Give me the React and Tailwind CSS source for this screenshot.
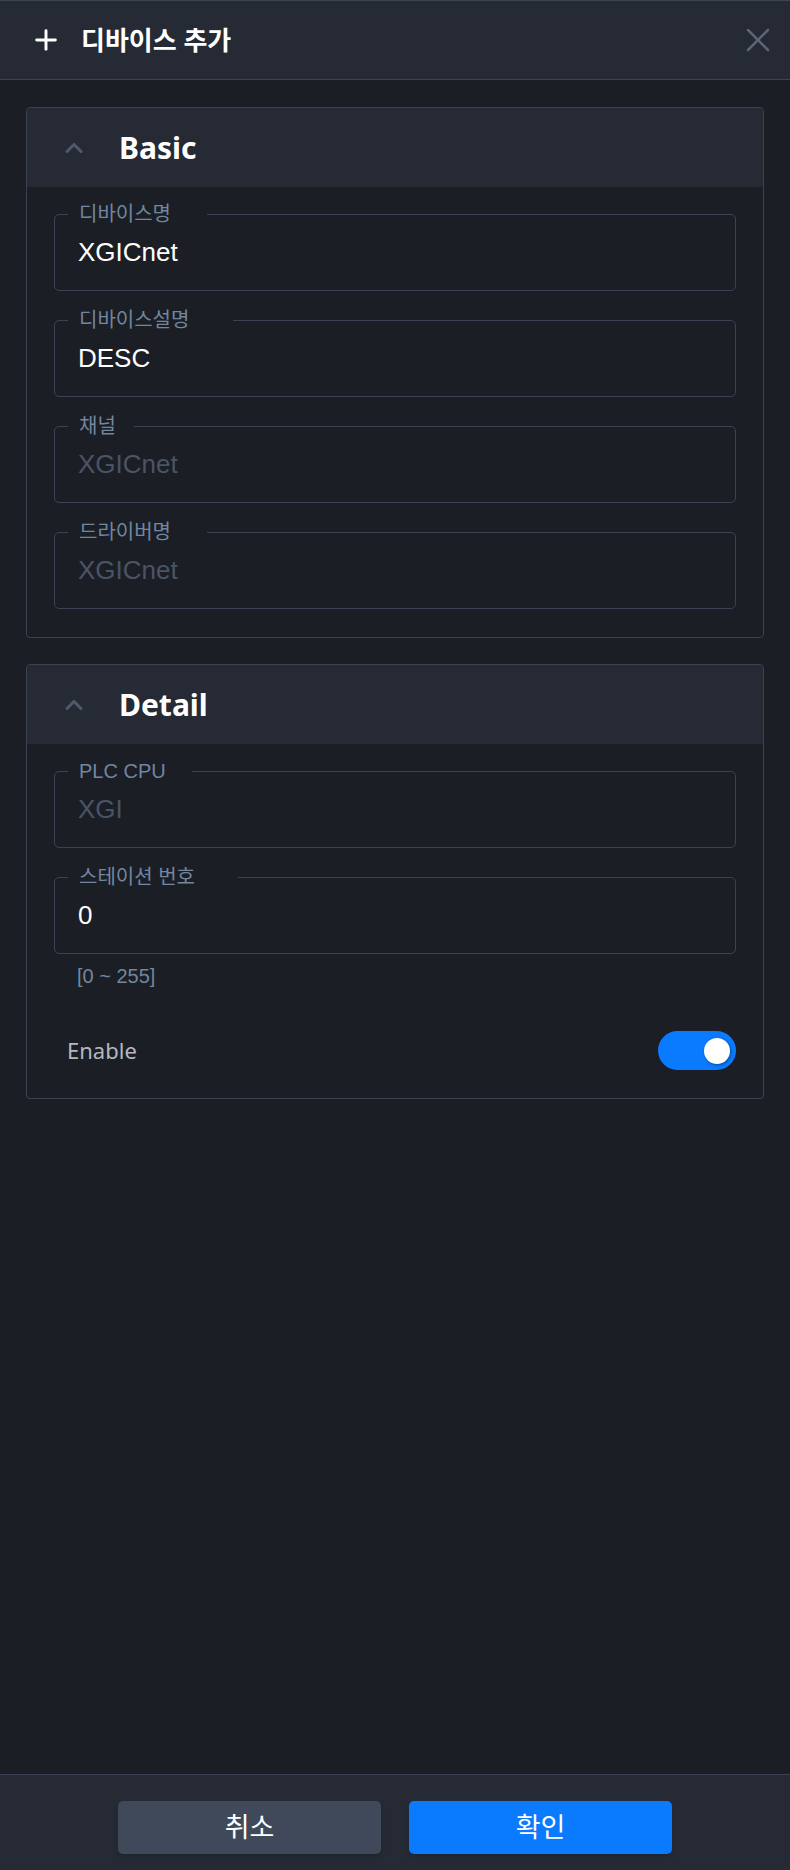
import { Plus, X, ChevronUp } from "lucide-react";

const sans = "font-['Noto_Sans','Noto_Sans_CJK_KR',sans-serif]";
const arial = "font-['Liberation_Sans','Noto_Sans_CJK_KR',sans-serif]";

const basicFields = [
    { label: '디바이스명', value: 'XGICnet', notch: 'w-[139px]' },
    { label: '디바이스설명', value: 'DESC', notch: 'w-[165px]' },
    { label: '채널', value: 'XGICnet', notch: 'w-[66px]', disabled: true },
    { label: '드라이버명', value: 'XGICnet', notch: 'w-[139px]', disabled: true },
];

const Field = ({ label, value, notch, disabled }) => (
    <div className="relative h-[77px] border border-[#3b4353] rounded-[5px] flex items-center pl-[23px]">
        <span className={`absolute -top-[14px] left-[13px] ${notch} pl-[11px] bg-[#1b1e25] text-[20px] leading-[26px] text-[#7286a0] ${arial}`}>
            {label}
        </span>
        <span className={`text-[26px] ${arial} ${disabled ? 'text-[#4a5465]' : 'text-white'}`}>{value}</span>
    </div>
);

const Section = ({ title, children }) => (
    <section className="border border-[#3b4353] rounded-[4px] overflow-hidden">
        <div className="h-[79px] bg-[#252a34] flex items-center">
            <ChevronUp size={28} strokeWidth={2.7} className="ml-[33px] text-[#4f596b]" />
            <h2 className={`ml-[31px] text-[30px] font-bold text-white ${sans}`}>{title}</h2>
        </div>
        <div className="px-[27px] pt-[27px] pb-[28px] flex flex-col">{children}</div>
    </section>
);

export default function App() {
    return (
        <div className="h-[1870px] bg-[#1b1e25] flex flex-col">
            <header className="h-[80px] shrink-0 bg-[#252a34] border-t border-b border-[#3b4353] flex items-center">
                <Plus size={32} strokeWidth={2.2} className="ml-[30px] text-white" />
                <h1 className={`ml-[19px] text-[26px] font-bold text-white ${sans}`}>디바이스 추가</h1>
                <X size={40} strokeWidth={1.5} className="ml-auto mr-[12px] text-[#5b6577]" />
            </header>

            <main className="flex-1 px-[26px] pt-[27px] flex flex-col gap-[26px]">
                <Section title="Basic">
                    <div className="flex flex-col gap-[29px]">
                        {basicFields.map((f) => (
                            <Field key={f.label} {...f} />
                        ))}
                    </div>
                </Section>

                <Section title="Detail">
                    <div className="flex flex-col gap-[29px]">
                        <Field label="PLC CPU" value="XGI" notch="w-[124px]" disabled />
                        <Field label="스테이션 번호" value="0" notch="w-[170px]" />
                    </div>
                    <p className={`mt-[7px] pl-[23px] text-[20px] text-[#7286a0] ${arial}`}>[0 ~ 255]</p>
                    <div className="mt-[40px] flex items-center justify-between pl-[13px]">
                        <span className={`text-[22px] text-[#b3b8c1] ${sans}`}>Enable</span>
                        <div className="w-[78px] h-[39px] rounded-full bg-[#0a7aff] flex items-center justify-end pr-[6px]">
                            <div className="w-[26px] h-[26px] rounded-full bg-white shadow-[1px_1px_3px_rgba(0,0,0,0.4)]" />
                        </div>
                    </div>
                </Section>
            </main>

            <footer className="h-[96px] shrink-0 bg-[#252a34] border-t border-[#3b4353] flex justify-center gap-[28px] pt-[26px]">
                <button className={`w-[263px] h-[53px] rounded-[5px] bg-[#404959] text-white text-[27px] shadow-md ${sans}`}>취소</button>
                <button className={`w-[263px] h-[53px] rounded-[5px] bg-[#0a7aff] text-white text-[27px] shadow-md ${sans}`}>확인</button>
            </footer>
        </div>
    );
}
